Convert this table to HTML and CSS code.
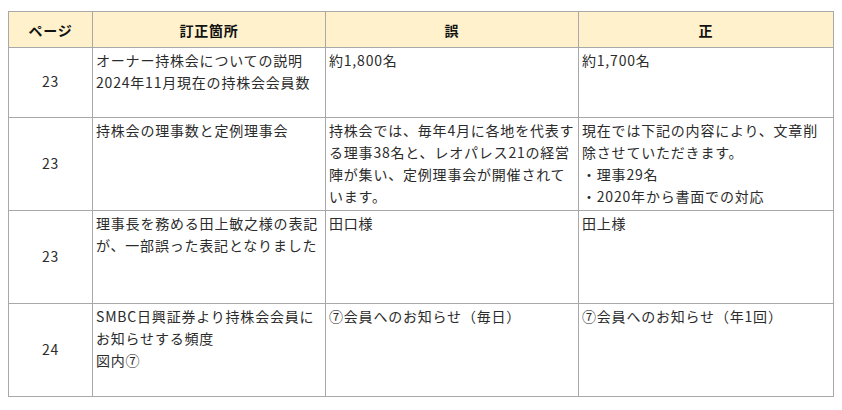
FILE: index.html
```html
<!DOCTYPE html>
<html lang="ja">
<head>
<meta charset="utf-8">
<title>訂正一覧</title>
<link rel="stylesheet" href="styles.css">
</head>
<body>
<table class="errata">
  <colgroup>
    <col class="c-page">
    <col class="c-place">
    <col class="c-wrong">
    <col class="c-right">
  </colgroup>
  <thead>
    <tr>
      <th>ページ</th>
      <th>訂正箇所</th>
      <th>誤</th>
      <th>正</th>
    </tr>
  </thead>
  <tbody>
    <tr class="r-short">
      <td class="page">23</td>
      <td>オーナー持株会についての説明<br>2024年11月現在の持株会会員数</td>
      <td>約1,800名</td>
      <td>約1,700名</td>
    </tr>
    <tr class="r-tall">
      <td class="page">23</td>
      <td>持株会の理事数と定例理事会</td>
      <td>持株会では、毎年4月に各地を代表する理事38名と、レオパレス21の経営陣が集い、定例理事会が開催されています。</td>
      <td>現在では下記の内容により、文章削除させていただきます。<br>・理事29名<br>・2020年から書面での対応</td>
    </tr>
    <tr class="r-tall">
      <td class="page">23</td>
      <td>理事長を務める田上敏之様の表記が、一部誤った表記となりました</td>
      <td>田口様</td>
      <td>田上様</td>
    </tr>
    <tr class="r-tall">
      <td class="page">24</td>
      <td>SMBC日興証券より持株会会員にお知らせする頻度<br>図内⑦</td>
      <td>⑦会員へのお知らせ（毎日）</td>
      <td>⑦会員へのお知らせ（年1回）</td>
    </tr>
  </tbody>
</table>
</body>
</html>
```

FILE: styles.css
```css
html, body {
  margin: 0;
  background: #ffffff;
}

body {
  padding: 11px 8px 0 8px;
  font-family: "Noto Sans CJK JP", "Noto Sans", sans-serif;
  font-size: 14px;
  line-height: 22px;
  color: #2b2b2b;
}

.errata {
  border-collapse: collapse;
  table-layout: fixed;
  width: 825px;
}

.c-page { width: 84px; }
.c-place { width: 233px; }
.c-wrong { width: 253px; }
.c-right { width: 255px; }

.errata th,
.errata td {
  border: 1px solid #a8a8a8;
  letter-spacing: 0.8px;
}

.errata th {
  background: #fff1cc;
  color: #111111;
  font-weight: bold;
  text-align: center;
  height: 35px;
  padding: 0 3px;
}

.errata td {
  vertical-align: top;
  text-align: left;
  padding: 1px 3px 3px 3px;
}

.errata td.page {
  vertical-align: middle;
  text-align: center;
  padding-top: 0;
}

.r-short td { height: 65px; }
.r-tall td { height: 88px; }
```
